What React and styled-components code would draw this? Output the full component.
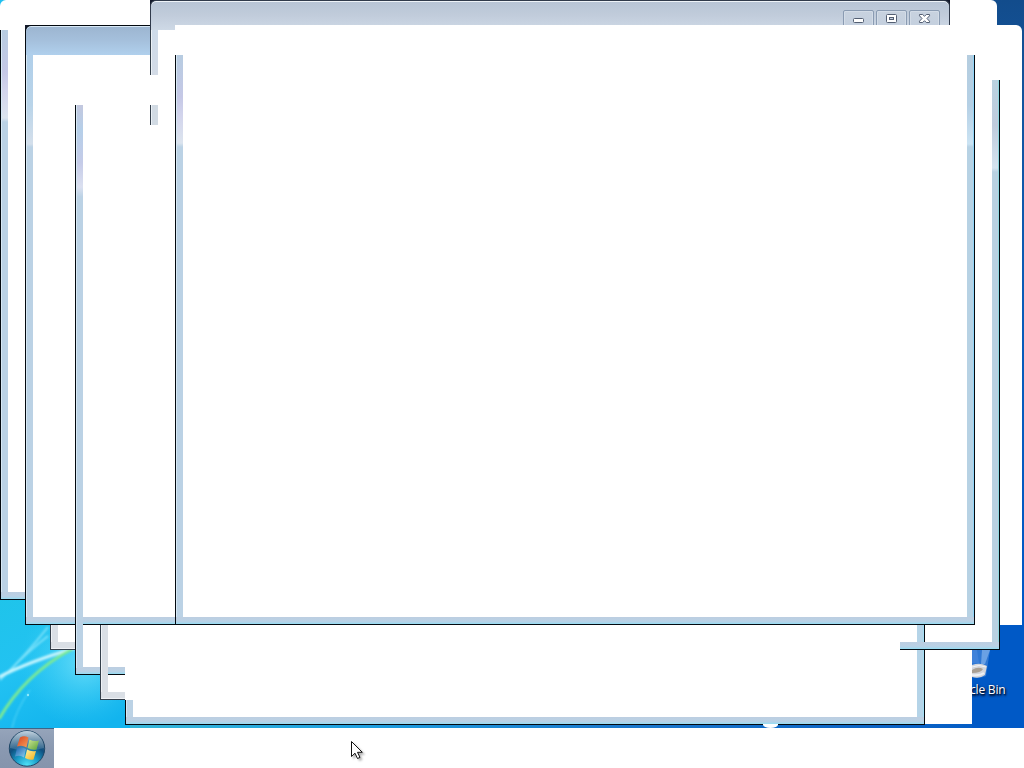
import React from "react";
import styled, { createGlobalStyle } from "styled-components";

const LINE = "#03090f";
const SOFT_LINE = "#35404b";
const GLASS = "#bbd2e5";
const PALE_GLASS = "#dadfe5";

const SHEEN = `linear-gradient(180deg, #b7cce1 0, #c5c8e6 42px, #d2d4ec 60px, #dce4ee 88px, ${GLASS} 92px)`;
const SHEEN_LATE = `linear-gradient(180deg, #c3c8df 0, #b5cfe9 25px, #c5cbe8 58px, #dbe0f0 82px, ${GLASS} 92px)`;
const SHEEN_BLUE =
  "linear-gradient(180deg, #b5cddf 0, #b5d0e5 50px, #cbe3f3 89px, #b7d2e4 92px)";
const SHEEN_GREY =
  "linear-gradient(180deg, #b9d2e0 0, #bfcbdc 45px, #d4e3ef 88px, #b8d1e1 92px)";

const GlobalStyle = createGlobalStyle`
  body {
    margin: 0;
    overflow: hidden;
    font-family: "Open Sans", "Noto Sans", sans-serif;
  }
`;

const Desktop = styled.main`
  position: relative;
  display: flex;
  flex-direction: column;
  width: 1024px;
  height: 768px;
  overflow: hidden;
  background: #fff;
`;

const Wallpaper = styled.div`
  display: flex;
  align-items: flex-end;
  justify-content: space-between;
  flex: 1;
  background: linear-gradient(
    90deg,
    #20c0f0 0,
    #35b6d8 130px,
    #1d9fdf 360px,
    #1a78cc 620px,
    #0a62c4 900px,
    #0059c6 1024px
  );
`;

const Sky = styled.div`
  align-self: stretch;
  display: flex;
  align-items: flex-end;
  width: 52px;
  background: linear-gradient(
    180deg,
    #124c8c 0,
    #14549b 80px,
    #0a5cb8 300px,
    #0059c6 600px
  );
`;

const RecycleBin = styled.div`
  display: flex;
  flex-direction: column;
  width: 52px;
  height: 78px;
  overflow: hidden;

  svg {
    flex: none;
  }
`;

const IconLabel = styled.span`
  margin: 2px 0 0 -2px;
  color: #fff;
  font-size: 12px;
  line-height: 16px;
  letter-spacing: -0.2px;
  white-space: nowrap;
  text-shadow: 1px 1px 1px #001b45, 0 1px 3px #001b45, 1px 2px 2px #001b45;
`;

const Taskbar = styled.footer`
  display: flex;
  height: 40px;
  background: #fff;
`;

const StartButton = styled.div`
  box-sizing: border-box;
  width: 54px;
  height: 40px;
  padding: 0 0 0 7px;
  border-top: 1px solid #3e6587;
  background: linear-gradient(180deg, #95a4ba 0, #8a99b1 50%, #8594ac 100%);
`;

// a window on the desktop; only the parts that got repainted are visible
const WindowBox = styled.section`
  position: absolute;
  left: ${(p) => p.$x}px;
  top: ${(p) => p.$y}px;
  width: ${(p) => p.$w}px;
  height: ${(p) => p.$h}px;
  display: flex;
  flex-direction: column;
  overflow: hidden;
  border-radius: ${(p) => p.$radius || 0};
  background: ${(p) => (p.$clear ? "transparent" : "#fff")};
`;

const BlankHeader = styled.div`
  flex: none;
  height: 30px;
`;

const Middle = styled.div`
  flex: 1;
  min-height: 0;
  display: flex;
  justify-content: ${(p) => (p.$end ? "flex-end" : "space-between")};
`;

const Side = styled.div`
  box-sizing: border-box;
  flex: none;
  align-self: ${(p) => (p.$h ? "flex-end" : "stretch")};
  width: 8px;
  height: ${(p) => (p.$h ? `${p.$h}px` : "auto")};
  border: solid ${(p) => p.$line || LINE};
  border-width: ${(p) => (p.$right ? "0 1px 0 0" : "0 0 0 1px")};
  background: ${(p) => p.$fill || GLASS};
  box-shadow: inset ${(p) => (p.$right ? -1 : 1)}px 0 0
    ${(p) => p.$edge || "#d7e8f4"};
`;

const Bottom = styled.div`
  box-sizing: border-box;
  flex: none;
  height: 8px;
  border: solid ${(p) => p.$line || LINE};
  border-width: 0 ${(p) => (p.$right ? 1 : 0)}px 1px
    ${(p) => (p.$left ? 1 : 0)}px;
  background: ${(p) =>
    p.$fill || "linear-gradient(180deg, #bccee1 0, #bad1e5 4px, #a9d5eb 6px)"};
  box-shadow: inset 0 -1px 0 ${(p) => p.$edge || "#9bdcf2"};
`;

const TitleShell = styled.div`
  flex: none;
  height: 30px;
  overflow: hidden;
  background: #141a2c;
`;

const TitleBar = styled.div`
  box-sizing: border-box;
  height: 30px;
  display: flex;
  justify-content: flex-end;
  gap: 2px;
  padding: 9px 9px 0 0;
  border: 1px solid ${(p) => p.$line || LINE};
  border-bottom: 0;
  border-radius: 6px 6px 0 0;
  background: ${(p) => p.$fill};
  box-shadow: inset 0 1px 0 ${(p) => p.$edge};
`;

const CaptionButton = styled.div`
  box-sizing: border-box;
  flex: none;
  width: 31px;
  height: 20px;
  border: 1px solid #8a9bb2;
  border-radius: 2px;
  background: linear-gradient(180deg, #c8d2df, #c3cfde);
  box-shadow: inset 0 0 0 1px #d3dce7;

  svg {
    display: block;
  }
`;

const SidePieces = styled.div`
  display: flex;
  flex-direction: column;
  gap: 30px;
`;

const SidePiece = styled.div`
  box-sizing: border-box;
  width: 8px;
  height: ${(p) => p.$h}px;
  border-left: 1px solid ${SOFT_LINE};
  background: ${(p) => p.$fill};
  box-shadow: inset 1px 0 0 #eaf0f6;
`;

const Pointer = styled.svg`
  position: absolute;
  left: 350px;
  top: 740px;
  filter: drop-shadow(2px 2px 1px rgba(0, 0, 0, 0.3));
`;

function Frame({ x, y, w, h, radius, clear, header, left, right, bottom }) {
  return (
    <WindowBox $x={x} $y={y} $w={w} $h={h} $radius={radius} $clear={clear}>
      {header}
      <Middle $end={!left}>
        {left && <Side {...left} />}
        {right && <Side $right {...right} />}
      </Middle>
      {bottom && <Bottom $left={!!left} $right={!!right} {...bottom} />}
    </WindowBox>
  );
}

function Swooshes() {
  return (
    <svg width="130" height="130" viewBox="0 598 130 130">
      <defs>
        <linearGradient id="sea" x1="0" y1="0" x2="0.5" y2="1">
          <stop offset="0" stopColor="#1fc4ea" />
          <stop offset="0.5" stopColor="#22c2f2" />
          <stop offset="1" stopColor="#12b4ee" />
        </linearGradient>
        <radialGradient id="glow" cx="0.65" cy="0.5" r="0.5">
          <stop offset="0" stopColor="#78e2fa" stopOpacity="0.8" />
          <stop offset="1" stopColor="#3bcff4" stopOpacity="0" />
        </radialGradient>
        <filter id="soft">
          <feGaussianBlur stdDeviation="0.8" />
        </filter>
      </defs>
      <rect y="598" width="130" height="130" fill="url(#sea)" />
      <rect y="598" width="130" height="130" fill="url(#glow)" />
      <g fill="none" filter="url(#soft)">
        <path d="M0 680Q25 656 48 627" stroke="#7fe3fa" strokeWidth="1.8" />
        <path d="M12 668Q30 650 48 636" stroke="#7fe3fa" strokeWidth="1.6" />
        <path d="M-1 677Q28 662 75 648" stroke="#c9f6fe" strokeWidth="3" />
        <path d="M-1 719Q25 674 72 649" stroke="#7eeb93" strokeWidth="3" />
        <path d="M12 728Q16 710 30 690" stroke="#4dd2f6" strokeWidth="1.2" />
      </g>
      <circle cx="28" cy="695" r="1.2" fill="#8eeafc" />
    </svg>
  );
}

function BinIcon() {
  return (
    <svg width="20" height="30" viewBox="0 0 20 30">
      <path d="M0 0H18L14 26Q8 29 0 27Z" fill="#2f78d4" />
      <path d="M10 0H18L13 14H9Z" fill="#6aa1e4" />
      <path d="M0 0H5L7 13H0Z" fill="#3f82da" />
      <path d="M0 15Q8 12 15 16L13 25Q8 29 0 27Z" fill="#d3d6dc" />
      <path d="M0 20Q6 16 11 19Q9 23 0 23Z" fill="#a89f93" />
      <path d="M0 17Q7 14 14 17" stroke="#f0f3f6" fill="none" />
      <path d="M0 25Q8 26 12 23" stroke="#edf1f5" strokeWidth="2" fill="none" />
    </svg>
  );
}

function StartOrb() {
  return (
    <svg width="40" height="39" viewBox="0 0 40 39">
      <defs>
        <radialGradient id="orb" cx="0.5" cy="0.98" r="0.8">
          <stop offset="0" stopColor="#4fe4f8" />
          <stop offset="0.4" stopColor="#1b9cc8" />
          <stop offset="0.75" stopColor="#0f5080" />
          <stop offset="1" stopColor="#2f5a7c" />
        </radialGradient>
        <linearGradient id="gloss" x1="0" y1="0" x2="0" y2="1">
          <stop offset="0" stopColor="#dce8f1" stopOpacity="0.85" />
          <stop offset="1" stopColor="#8db0c7" stopOpacity="0.2" />
        </linearGradient>
        <linearGradient id="red" x1="0" y1="0" x2="1" y2="1">
          <stop offset="0" stopColor="#d8421c" />
          <stop offset="1" stopColor="#f7a05c" />
        </linearGradient>
        <linearGradient id="green" x1="0" y1="0" x2="1" y2="1">
          <stop offset="0" stopColor="#cfe596" />
          <stop offset="1" stopColor="#5ba437" />
        </linearGradient>
        <linearGradient id="blue" x1="0" y1="0" x2="1" y2="1">
          <stop offset="0" stopColor="#1c5fae" />
          <stop offset="1" stopColor="#8fd1ee" />
        </linearGradient>
        <linearGradient id="yellow" x1="0" y1="0" x2="1" y2="1">
          <stop offset="0" stopColor="#fff1a0" />
          <stop offset="1" stopColor="#f3b11b" />
        </linearGradient>
      </defs>
      <circle cx="20" cy="19.500" r="17.700" fill="url(#orb)" stroke="#1f4767" />
      <path d="M3 19A17 17 0 0 1 37 19Q20 24 3 19Z" fill="url(#gloss)" />
      <path d="M13 8.500Q17 6 21.500 8.500L19.500 18.500Q15 15.500 10 17.500Z" fill="url(#red)" />
      <path d="M22.500 10.500Q27 13 32 11.500L29.500 20.500Q25 21.500 20.500 19Z" fill="url(#green)" />
      <path d="M10 19Q15 17 19 20L17 28.500Q13 25.500 8 27.500Z" fill="url(#blue)" />
      <path d="M20 20.500Q24 23 29 22L26.500 30.500Q22 31.500 18 29Z" fill="url(#yellow)" />
    </svg>
  );
}

function CaptionIcon({ kind }) {
  return (
    <svg width="29" height="18" viewBox="0 0 29 18">
      {kind === "min" && (
        <rect x="9.500" y="7.500" width="10" height="4" rx="1" fill="#fff" stroke="#535e72" />
      )}
      {kind === "max" && (
        <>
          <rect x="9.500" y="3.500" width="10" height="8" rx="1" fill="#fff" stroke="#535e72" />
          <rect x="12.500" y="6.500" width="4" height="2" fill="#c4cfdf" stroke="#535e72" />
        </>
      )}
      {kind === "close" && (
        <path
          d="M9.500 3.500H12.700L14.500 5.300L16.300 3.500H19.500V4.800L17 7.500L19.500 10.200V11.500H16.300L14.500 9.700L12.700 11.500H9.500V10.200L12 7.500L9.500 4.800Z"
          fill="#fff"
          stroke="#535e72"
        />
      )}
    </svg>
  );
}

const pale = { $fill: PALE_GLASS, $line: SOFT_LINE, $edge: "#eff2f6" };

export default function App() {
  return (
    <>
      <GlobalStyle />
      <Desktop>
        <Wallpaper>
          <Swooshes />
          <Sky>
            <RecycleBin>
              <BinIcon />
              <IconLabel>cle Bin</IconLabel>
            </RecycleBin>
          </Sky>
        </Wallpaper>
        <Taskbar>
          <StartButton>
            <StartOrb />
          </StartButton>
        </Taskbar>

        <Frame
          x={0}
          y={0}
          w={997}
          h={600}
          radius="6px 6px 0 0"
          header={<BlankHeader />}
          left={{ $fill: SHEEN }}
          bottom={{}}
        />
        <Frame x={175} y={25} w={847} h={600} radius="0 6px 0 0" />
        <Frame x={50} y={625} w={50} h={25} left={pale} bottom={pale} />
        <Frame x={75} y={105} w={50} h={570} left={{}} bottom={{}} />
        <Frame x={100} y={625} w={25} h={42} left={pale} />
        <Frame x={100} y={667} w={25} h={8} clear left={pale} />
        <Frame x={100} y={675} w={25} h={25} left={pale} bottom={pale} />
        <Frame x={924} y={625} w={48} h={99} />
        <Frame
          x={125}
          y={625}
          w={800}
          h={100}
          left={{ $h: 17 }}
          right={{ $fill: "#b5d4e8", $edge: "#a3dff4" }}
          bottom={{}}
        />
        <Frame x={763} y={724} w={15} h={4} radius="0 0 9px 9px / 0 0 4px 4px" />
        <Frame x={925} y={625} w={74} h={25} />
        <Frame
          x={900}
          y={80}
          w={100}
          h={570}
          clear
          right={{ $fill: SHEEN_GREY, $edge: "#8fd8e0" }}
          bottom={{}}
        />

        <Frame
          x={25}
          y={25}
          w={950}
          h={600}
          header={
            <TitleShell>
              <TitleBar
                $edge="#d9e9f6"
                $fill="linear-gradient(180deg, #9cb5d0 0, #a5c0dc 50%, #b0d0ed 100%)"
              />
            </TitleShell>
          }
          left={{
            $fill: `linear-gradient(180deg, #b0cfea 0, #b9d4e9 50px, #d4dfeb 89px, ${GLASS} 92px)`,
          }}
          bottom={{}}
        />
        <Frame x={75} y={105} w={8} h={563} left={{ $fill: SHEEN_LATE }} />

        <Frame x={158} y={30} w={17} h={45} />
        <WindowBox $x={150} $y={0} $w={800} $h={125} $clear>
          <TitleShell>
            <TitleBar
              $line="#303a4b"
              $edge="#eef3f8"
              $fill="linear-gradient(180deg, #b7c4d5 0, #c1ccdb 50%, #ced9e6 100%)"
            >
              <CaptionButton>
                <CaptionIcon kind="min" />
              </CaptionButton>
              <CaptionButton>
                <CaptionIcon kind="max" />
              </CaptionButton>
              <CaptionButton>
                <CaptionIcon kind="close" />
              </CaptionButton>
            </TitleBar>
          </TitleShell>
          <SidePieces>
            <SidePiece
              $h={45}
              $fill="linear-gradient(180deg, #cedbe9, #d3dbe6)"
            />
            <SidePiece $h={20} $fill="#d1dae3" />
          </SidePieces>
        </WindowBox>

        <Frame
          x={175}
          y={25}
          w={800}
          h={600}
          header={<BlankHeader />}
          left={{ $fill: SHEEN }}
          right={{ $fill: SHEEN_BLUE, $edge: "#8fd5f8" }}
          bottom={{}}
        />

        <Pointer width="14" height="21" viewBox="0 0 14 21">
          <path
            d="M1.500 1.500V16.500L5 13.200L7.500 18.500L10 17.400L7.500 12.300H12.300Z"
            fill="#fff"
            stroke="#111"
          />
        </Pointer>
      </Desktop>
    </>
  );
}
